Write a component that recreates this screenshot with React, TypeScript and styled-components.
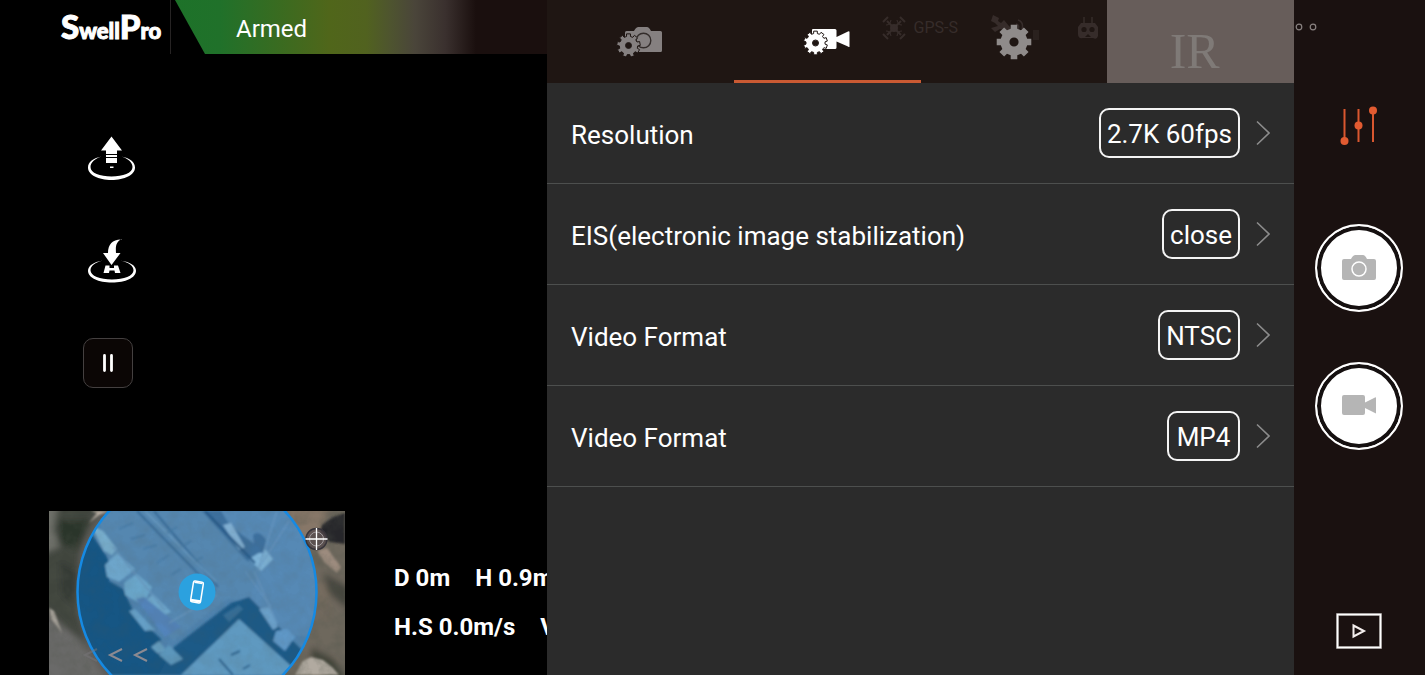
import React, { useState } from "react";
import styled, { createGlobalStyle } from "styled-components";

const GlobalStyle = createGlobalStyle`
  *, *::before, *::after { box-sizing: border-box; }
  body { margin: 0; background: #000; font-family: Roboto, "Liberation Sans", sans-serif; color: #fff; }
  button { font: inherit; color: inherit; background: none; border: 0; padding: 0; cursor: pointer; }
  svg { display: block; flex: none; }
`;

const Screen = styled.main`
  display: grid;
  grid-template-columns: minmax(0, 547fr) minmax(0, 747fr) 131px;
  min-height: 100vh;
`;

/* ---------- flight view ---------- */

const Flight = styled.section`
  display: flex;
  flex-direction: column;
  min-width: 0;
  overflow: hidden;
  background: #000;
`;

const StatusBar = styled.header`
  display: flex;
  height: 54px;
  background: #1a0f0e;
`;

const Brand = styled.h1`
  display: flex;
  align-items: baseline;
  width: 171px;
  margin: 0;
  padding-left: 61px;
  border-right: 1px solid #262323;
  background: #000;
  font-family: Lato, sans-serif;
  font-weight: 900;
  font-size: 22px;
  line-height: 52px;
  white-space: nowrap;
  -webkit-text-stroke: 1px #fff;
`;

const BrandCap = styled.span`
  font-size: 33px;
`;

const ArmedWrap = styled.div`
  width: 305px;
  background: #000;
`;

const Armed = styled.div`
  height: 54px;
  padding-left: 65px;
  font-size: 24px;
  line-height: 58px;
  clip-path: polygon(4px 0, 100% 0, 100% 100%, 34px 100%);
  background: linear-gradient(90deg, #1d7229 0, #20712a 16%, #3a6b20 36%, #50661a 52%, #51621f 64%, #4e542f 72%, #4a453a 80%, #3a302e 90%, #1a0f0e 100%);
`;

const Actions = styled.nav`
  display: flex;
  flex-direction: column;
  align-items: flex-start;
  gap: 52px;
  padding: 80px 0 0 83px;
`;

const ActionButton = styled.button`
  width: 56px;
  height: 50px;
`;

const PauseButton = styled.button`
  display: flex;
  align-items: center;
  justify-content: center;
  width: 50px;
  height: 50px;
  border: 1px solid #444040;
  border-radius: 10px;
  background: #0b0605;
`;

const FlightFooter = styled.div`
  display: flex;
  gap: 49px;
  margin-top: auto;
  padding-left: 49px;
`;

const Telemetry = styled.dl`
  display: flex;
  flex-direction: column;
  margin: 0;
  padding-top: 43px;
  font-size: 24px;
  font-weight: 700;
  line-height: 49px;
  white-space: nowrap;
`;

const TelemetryRow = styled.div`
  display: flex;
  gap: 25px;
`;

const Metric = styled.div`
  display: flex;
  gap: 6px;
  dt, dd { margin: 0; }
`;

/* ---------- settings panel ---------- */

const Panel = styled.section`
  background: #2b2b2b;
  min-width: 0;
`;

const TabBar = styled.div`
  position: relative;
  display: grid;
  grid-template-columns: repeat(4, 1fr);
  height: 83px;
  background: #1f1613;
`;

const Tab = styled.button<{ $active?: boolean }>`
  position: relative;
  display: flex;
  align-items: center;
  justify-content: center;
  color: ${(p) => (p.$active ? "#fff" : "#858080")};
  box-shadow: ${(p) => (p.$active ? "inset 0 -3px #ca5a33" : "none")};
`;

const InfraredTab = styled(Tab)`
  padding: 18px 12px 0 0;
  background: #675d5a;
  color: #7f7a77;
  font-family: "Liberation Serif", serif;
  font-size: 50px;
  line-height: 56px;
`;

const DimStatus = styled.div`
  position: absolute;
  top: 14px;
  right: 194px;
  display: flex;
  align-items: center;
  color: #362c2a;
  font-size: 16px;
  line-height: 28px;
  pointer-events: none;
`;

const DimLabel = styled.span`
  padding: 0 32px 0 8px;
`;

const DimGap = styled.span`
  width: 30px;
`;

const SettingRow = styled.button`
  display: flex;
  align-items: center;
  width: 100%;
  height: 101px;
  padding: 0 24px;
  border-bottom: 1px solid #4d4f4e;
  font-size: 26px;
  line-height: 32px;
  text-align: left;
`;

const SettingName = styled.span`
  flex: 1;
  padding-top: 3px;
`;

const SettingValue = styled.span`
  min-width: 73px;
  height: 50px;
  margin-right: 16px;
  padding: 0 6px;
  border: 2px solid #f4f4f4;
  border-radius: 10px;
  line-height: 48px;
  text-align: center;
`;

/* ---------- camera rail ---------- */

const Rail = styled.aside`
  display: flex;
  flex-direction: column;
  align-items: center;
  padding-right: 2px;
  background: #1a1110;
`;

const RailTop = styled.div`
  align-self: stretch;
  height: 54px;
  padding-top: 22px;
`;

const AdjustButton = styled.button`
  margin-top: 52px;
`;

const Shutter = styled.button<{ $gap: number }>`
  display: flex;
  align-items: center;
  justify-content: center;
  width: 88px;
  height: 88px;
  margin-top: ${(p) => p.$gap}px;
  border: 2px solid #fff;
  border-radius: 50%;
  background: #fff;
  box-shadow: inset 0 0 0 4px #151010;
`;

const GalleryButton = styled.button`
  margin-top: auto;
  padding-bottom: 25px;
`;

/* ---------- drawings ---------- */

function gear(cx: number, cy: number, outer: number, inner: number, teeth: number, hole: number) {
  const step = (Math.PI * 2) / teeth;
  const pts: string[] = [];
  for (let i = 0; i < teeth; i++) {
    const a = i * step - Math.PI / 2;
    const corners: [number, number][] = [
      [inner, -0.31],
      [outer, -0.24],
      [outer, 0.24],
      [inner, 0.31],
    ];
    corners.forEach(([r, k]) => {
      pts.push(`${(cx + r * Math.cos(a + k * step)).toFixed(2)} ${(cy + r * Math.sin(a + k * step)).toFixed(2)}`);
    });
  }
  return `M${pts.join("L")}Z M${cx - hole} ${cy}a${hole} ${hole} 0 1 0 ${hole * 2} 0a${hole} ${hole} 0 1 0 ${-hole * 2} 0Z`;
}

const TakeoffIcon = () => (
  <svg width="56" height="50" viewBox="0 0 56 50" fill="#fff" aria-hidden="true">
    <path d="M28.500 2.500 39 16.500H34V20H23V16.500H18ZM23 21H34V23H23ZM23 24H34V29H23Z" />
    <path fillRule="evenodd" d="M19 22.500C10 24 5 28 5 33.500C5 41 15.500 46 28.500 46S52 41 52 33.500C52 28 47 24 38 22.500C45 24.500 49.500 28.500 49.500 33C49.500 39 40 42.500 28.500 42.500S7.500 39 7.500 33C7.500 28.500 12 24.500 19 22.500Z" />
    <path d="M27 32.500H30.500V34H27Z" />
  </svg>
);

const LandIcon = () => (
  <svg width="56" height="50" viewBox="0 0 56 50" fill="#fff" aria-hidden="true">
    <path d="M39 3C33 5.500 32.500 10 33 17H37.500L28.500 29 20 17H25C25 8 30 3 39 3.500Z" />
    <path d="M22.500 29.500H26.500V32H31V29.500H35L37.500 37H32L31.500 34.500H26.500L26 37H20.500Z" />
    <path fillRule="evenodd" d="M20 24.500C10 26 5 30 5 34.800C5 42 15.500 46.500 29 46.500S53 42 53 34.800C53 30 48 26 37 24.500C46 26.500 50.500 30 50.500 34.300C50.500 40 41 43.500 29 43.500S7.500 40 7.500 34.300C7.500 30 12 26.500 20 24.500Z" />
  </svg>
);

const PauseIcon = () => (
  <svg width="14" height="20" viewBox="0 0 14 20" stroke="#fff" strokeWidth="2.800" strokeLinecap="round" aria-hidden="true">
    <path d="M3.500 2.500V17.500M10.500 2.500V17.500" />
  </svg>
);

const PhotoSettingsIcon = () => (
  <svg width="48" height="32" viewBox="0 0 48 32" fill="currentColor" aria-hidden="true">
    <path d="M9 6.500Q9 5 10.500 5H18Q20 1 22.500 1H31Q33 1 35 5H44.500Q46 5 46 6.500V24.500Q46 26 44.500 26H9Z" />
    <circle cx="27.500" cy="14.500" r="7.300" fill="none" stroke="#332c2a" strokeWidth="1.400" />
    <path d={gear(12.5, 19.5, 11.8, 9.2, 9, 3)} fillRule="evenodd" stroke="#1f1613" strokeWidth="1" />
    <circle cx="12.500" cy="19.500" r="2.800" fill="#1f1613" />
  </svg>
);

const VideoSettingsIcon = () => (
  <svg width="48" height="32" viewBox="0 0 48 32" fill="currentColor" aria-hidden="true">
    <path d="M9 4Q9 3 10 3H32Q33.500 3 33.500 4.500V11L45 5.500Q46.500 5 46.500 6V20.500Q46.500 21.500 45 20.500L33.500 15.500V21.500Q33.500 23 32 23H9Z" />
    <path d={gear(12.5, 17, 12, 9.6, 10, 3)} fillRule="evenodd" stroke="#1f1613" strokeWidth="1" />
    <circle cx="12.500" cy="17" r="2.800" fill="#1f1613" />
  </svg>
);

const GearIcon = () => (
  <svg width="36" height="36" viewBox="0 0 36 36" fill="#8f8b8a" aria-hidden="true">
    <path d={gear(18, 18, 17.6, 13.6, 8, 4.6)} fillRule="evenodd" />
  </svg>
);

const DroneIcon = () => (
  <svg width="24" height="24" viewBox="0 0 24 24" fill="none" stroke="currentColor" strokeWidth="2" aria-hidden="true">
    <path d="M5 5 19 19M19 5 5 19M1 6 6 1M18 1 23 6M1 18 6 23M18 23 23 18" />
    <path d="M4 9Q8 9 9 4M15 4Q16 9 20 9M4 15Q8 15 9 20M15 20Q16 15 20 15" strokeWidth="1.200" />
    <circle cx="12" cy="12" r="3" fill="currentColor" />
  </svg>
);

const SatelliteIcon = () => (
  <svg width="56" height="28" viewBox="0 0 56 28" fill="currentColor" aria-hidden="true">
    <path d="M3 1 9 4 8 7 11 9 14 6 19 12 24 17 20 21 14 16 10 15 5 18 1 14 8 12 5 9 1 7Z" />
    <path d="M28 6Q34 8 32 15M26 10Q30 11 28 15" fill="none" stroke="currentColor" strokeWidth="1.500" />
    <path d="M43 16H49V26H43Z" opacity=".5" />
  </svg>
);

const RemoteIcon = () => (
  <svg width="24" height="24" viewBox="0 0 24 24" aria-hidden="true">
    <path d="M8 1V7M16 1V7" stroke="currentColor" strokeWidth="1.500" />
    <path d="M5 7H19L22 11V20Q21 24 17 22H7Q2 23 2 18V11Z" fill="currentColor" />
    <circle cx="8" cy="13.500" r="2.600" fill="#1f1613" />
    <circle cx="16" cy="13.500" r="2.600" fill="#1f1613" />
    <path d="M9 21 12 18 15 21Z" fill="#1f1613" />
  </svg>
);

const Chevron = () => (
  <svg width="14" height="26" viewBox="0 0 14 26" fill="none" stroke="#8c8c8c" strokeWidth="1.600" aria-hidden="true">
    <path d="M1 1.500 13 13 1 24.500" />
  </svg>
);

const MoreDots = () => (
  <svg width="24" height="10" viewBox="0 0 24 10" fill="none" stroke="#898280" strokeWidth="1.200" aria-hidden="true">
    <circle cx="5" cy="5" r="2.800" />
    <circle cx="19" cy="5" r="2.800" />
  </svg>
);

const SlidersIcon = () => (
  <svg width="40" height="40" viewBox="0 0 40 40" fill="#e25b31" aria-hidden="true">
    <path d="M5.500 3V35M19.500 3V36M34 5V36" stroke="#d9572f" strokeWidth="2" />
    <circle cx="5.500" cy="35" r="4" />
    <circle cx="19.500" cy="19.500" r="4" />
    <circle cx="34" cy="4.500" r="4" />
  </svg>
);

const CameraIcon = () => (
  <svg width="34" height="28" viewBox="0 0 34 28" aria-hidden="true">
    <path fill="#b5b5b5" d="M2 5H9Q11 1 13.500 1H21Q23 1 25 5H32Q34 5 34 7V24Q34 26 32 26H2Q0 26 0 24V7Q0 5 2 5Z" />
    <circle cx="17" cy="15" r="7" fill="none" stroke="#fff" strokeWidth="1.500" />
  </svg>
);

const VideoIcon = () => (
  <svg width="34" height="24" viewBox="0 0 34 24" fill="#b5b5b5" aria-hidden="true">
    <path d="M2 1H21Q23 1 23 3V8.500L33 3.500Q34 3 34 4V18.500Q34 20 33 19L23 14V19Q23 21 21 21H2Q0 21 0 19V3Q0 1 2 1Z" />
  </svg>
);

const GalleryIcon = () => (
  <svg width="46" height="38" viewBox="0 0 46 38" fill="none" aria-hidden="true">
    <rect x="1.500" y="2.500" width="43" height="33" stroke="#6b6462" strokeWidth="3" />
    <rect x="1.500" y="2.500" width="43" height="33" stroke="#fff" strokeWidth="1.800" />
    <path d="M17.500 13.500 28 19 17.500 24.500Z" stroke="#f4efed" strokeWidth="2" />
  </svg>
);

const MapView = () => (
  <svg width="296" height="164" viewBox="0 0 296 164" role="img" aria-label="Map with device position">
    <defs>
      <filter id="soft" x="-5%" y="-5%" width="110%" height="110%">
        <feGaussianBlur stdDeviation="1" />
      </filter>
      <filter id="softer" x="-5%" y="-5%" width="110%" height="110%">
        <feGaussianBlur stdDeviation="3" />
      </filter>
      <filter id="foliage" x="0" y="0" width="100%" height="100%">
        <feTurbulence type="fractalNoise" baseFrequency=".07" numOctaves="4" seed="8" />
        <feColorMatrix type="matrix" values="0 0 0 0 .08 0 0 0 0 .09 0 0 0 0 .07 1.800 1.200 0 0 -1.200" />
      </filter>
      <clipPath id="range"><circle cx="148" cy="81" r="120" /></clipPath>
    </defs>
    <rect width="296" height="164" fill="#5f5d5a" />
    <g filter="url(#softer)">
      <path d="M-10 -10H52L30 40 28 100 38 135 -10 92Z" fill="#3f453c" />
      <path d="M-10 -10H10L4 20 14 34 -10 44Z" fill="#73756e" />
      <path d="M10 8 40 8 28 40 8 32Z" fill="#2b342a" />
      <path d="M10 50 28 60 26 96 12 84Z" fill="#353b34" />
      <path d="M-10 100 30 128 60 174H-10Z" fill="#6b6a69" />
      <path d="M230 -10H306V174H230Z" fill="#6e675d" />
      <path d="M238 -10H281L271 22 262 38 240 18Z" fill="#877767" />
      <path d="M262 62 282 78 280 110 266 96Z" fill="#766c5f" />
      <path d="M274 62 300 76V100L280 82Z" fill="#44453e" />
      <path d="M262 136 285 148 300 170H280L262 150Z" fill="#3f4239" />
    </g>
    <g filter="url(#soft)">
      <path d="M0 97 5 100 13 122 2 108Z" fill="#a6a199" />
      <path d="M296 2 284 6 273 14 271 22 281 31 296 33Z" fill="#26272b" />
      <path d="M268 40 278 37 292 56 288 62 276 52Z" fill="#9c8b7e" />
      <path d="M254 150 262 146 274 149 284 157 290 164H246Z" fill="#b1aaa0" />
      <path d="M40 12 50 4 60 0H42L48 2Z" fill="#b6aca0" />
    </g>
    <rect width="296" height="164" filter="url(#foliage)" opacity=".3" />
    <g clipPath="url(#range)">
      <rect width="296" height="164" fill="#4f82ad" />
      <g filter="url(#soft)">
        <path d="M58 0H160L255 95 240 140 200 90 178 88 124 130 60 50 50 10Z" fill="#5587b0" />
        <path d="M172 0H250L275 80 260 125 228 124 200 88 212 55Z" fill="#5789b5" />
        <path d="M42 22 58 46 62 56 60 70 74 78 86 104 112 128 108 142 140 164H50L20 100 30 40Z" fill="#195784" />
        <path d="M110 164 125 136 182 92 200 86 262 148 235 164Z" fill="#1f5a87" />
        <path d="M153 0H172L180 14 220 44 212 51 198 50Z" fill="#3c6f9d" />
        <path d="M42 14 54 20 68 38 63 44 55 40Z" fill="#78afcf" />
        <path d="M56 54 68 42 86 58 70 71 58 66Z" fill="#6da5ca" />
        <path d="M75 72 88 63 103 76 94 94 76 84Z" fill="#6ba6ca" />
        <path d="M92 94 104 83 122 101 110 107Z" fill="#6ea7cc" />
        <path d="M87 88 95 86 132 116 116 126Z" fill="#5384bb" />
        <path d="M80 100 86 98 106 119 96 120Z" fill="#659fc6" />
        <path d="M102 136 110 130 118 140 108 142Z" fill="#649bbd" />
        <path d="M110 144 120 134 134 148 122 154Z" fill="#5c96bb" />
        <path d="M132 164 190 108 252 164Z" fill="#5f99c0" />
        <path d="M200 48 216 38 224 48 212 60Z" fill="#7db2d7" />
        <path d="M174 14 182 12 196 36 190 39Z" fill="#80afd2" />
        <path d="M204 24Q210 18 217 29L214 42 206 42Z" fill="#3d6f9e" />
        <path d="M220 96 229 116 224 119 210 98Z" fill="#6a9fc8" />
        <path d="M227 120 238 118 246 126 236 140 224 130Z" fill="#5f97c6" />
        <path d="M174 104 190 94 194 98 180 111Z" fill="#356e98" />
        <path d="M88 0 166 80M105 0 169 76" stroke="#376b98" strokeWidth="2" fill="none" />
        <path d="M96 0 167 71" stroke="#6b9bc1" strokeWidth="1.500" fill="none" />
        <path d="M64 36 116 99M120 112 168 84" stroke="#6594bb" strokeWidth="1.500" fill="none" />
        <path d="M156 0 206 52" stroke="#245785" strokeWidth="2" fill="none" />
        <path d="M70 18 84 12M82 28 96 24M94 38 108 34M108 52 120 44M122 64 132 58M118 22 128 16M132 36 142 30M146 50 154 46" stroke="#477aa5" strokeWidth="1.500" fill="none" />
        <path d="M170 148 184 164M182 144 191 140M194 158 201 154" stroke="#2d638e" strokeWidth="2" fill="none" />
        <path d="M196 60 222 96M205 60 228 112M228 0 210 56M240 10 208 60" stroke="#6899c3" strokeWidth="1" fill="none" />
      </g>
      <rect width="296" height="164" filter="url(#foliage)" opacity=".1" />
    </g>
    <circle cx="148" cy="81" r="119.500" fill="none" stroke="#168ae3" strokeWidth="2.500" />
    <circle cx="148" cy="81" r="18.500" fill="#2ba1df" />
    <g transform="rotate(9 148 81)">
      <rect x="143" y="70.500" width="10" height="21" rx="1.500" fill="#2ba1df" stroke="#fff" strokeWidth="1.500" />
      <path d="M143 88.500H153V91H143ZM144 71H152V72.500H144Z" fill="#fff" />
    </g>
    <circle cx="267.500" cy="28" r="10.500" fill="#51464a" fillOpacity=".7" stroke="#37343a" strokeWidth="1.500" />
    <circle cx="267.500" cy="28" r="7" fill="none" stroke="#a29c9e" strokeWidth="1" />
    <path d="M267.500 17V39M256.500 28H278.500" stroke="#fff" strokeWidth="1.300" />
    <g fill="none" strokeWidth="2">
      <path d="M48 138 36 144 48 150" stroke="#77767a" opacity=".5" />
      <path d="M73 138 61 144 73 150" stroke="#8c8a91" />
      <path d="M98 138 86 144 98 150" stroke="#8c8a91" />
    </g>
  </svg>
);

/* ---------- page ---------- */

const settings = [
  { name: "Resolution", value: "2.7K 60fps" },
  { name: "EIS(electronic image stabilization)", value: "close" },
  { name: "Video Format", value: "NTSC" },
  { name: "Video Format", value: "MP4" },
];

const telemetry = [
  [["D", "0m"], ["H", "0.9m"]],
  [["H.S", "0.0m/s"], ["V.S", "0.0m/s"]],
];

export default function App() {
  const [tab, setTab] = useState("video");
  return (
    <>
      <GlobalStyle />
      <Screen>
        <Flight>
          <StatusBar>
            <Brand>
              <BrandCap>S</BrandCap>well<BrandCap>P</BrandCap>ro
            </Brand>
            <ArmedWrap>
              <Armed role="status">Armed</Armed>
            </ArmedWrap>
          </StatusBar>
          <Actions aria-label="Flight actions">
            <ActionButton aria-label="Take off"><TakeoffIcon /></ActionButton>
            <ActionButton aria-label="Return and land"><LandIcon /></ActionButton>
            <PauseButton aria-label="Pause"><PauseIcon /></PauseButton>
          </Actions>
          <FlightFooter>
            <MapView />
            <Telemetry>
              {telemetry.map((row, i) => (
                <TelemetryRow key={i}>
                  {row.map(([name, value]) => (
                    <Metric key={name}>
                      <dt>{name}</dt>
                      <dd>{value}</dd>
                    </Metric>
                  ))}
                </TelemetryRow>
              ))}
            </Telemetry>
          </FlightFooter>
        </Flight>

        <Panel>
          <TabBar role="tablist">
            <DimStatus aria-hidden="true">
              <DroneIcon />
              <DimLabel>GPS-S</DimLabel>
              <SatelliteIcon />
              <DimGap />
              <RemoteIcon />
            </DimStatus>
            <Tab role="tab" aria-label="Photo settings" aria-selected={tab === "photo"} $active={tab === "photo"} onClick={() => setTab("photo")}>
              <PhotoSettingsIcon />
            </Tab>
            <Tab role="tab" aria-label="Video settings" aria-selected={tab === "video"} $active={tab === "video"} onClick={() => setTab("video")}>
              <VideoSettingsIcon />
            </Tab>
            <Tab role="tab" aria-label="General settings" aria-selected={tab === "general"} $active={tab === "general"} onClick={() => setTab("general")}>
              <GearIcon />
            </Tab>
            <InfraredTab role="tab" aria-selected={false}>IR</InfraredTab>
          </TabBar>
          {settings.map((s, i) => (
            <SettingRow key={i}>
              <SettingName>{s.name}</SettingName>
              <SettingValue>{s.value}</SettingValue>
              <Chevron />
            </SettingRow>
          ))}
        </Panel>

        <Rail>
          <RailTop><MoreDots /></RailTop>
          <AdjustButton aria-label="Adjustments"><SlidersIcon /></AdjustButton>
          <Shutter $gap={78} aria-label="Take photo"><CameraIcon /></Shutter>
          <Shutter $gap={50} aria-label="Record video"><VideoIcon /></Shutter>
          <GalleryButton aria-label="Gallery"><GalleryIcon /></GalleryButton>
        </Rail>
      </Screen>
    </>
  );
}
